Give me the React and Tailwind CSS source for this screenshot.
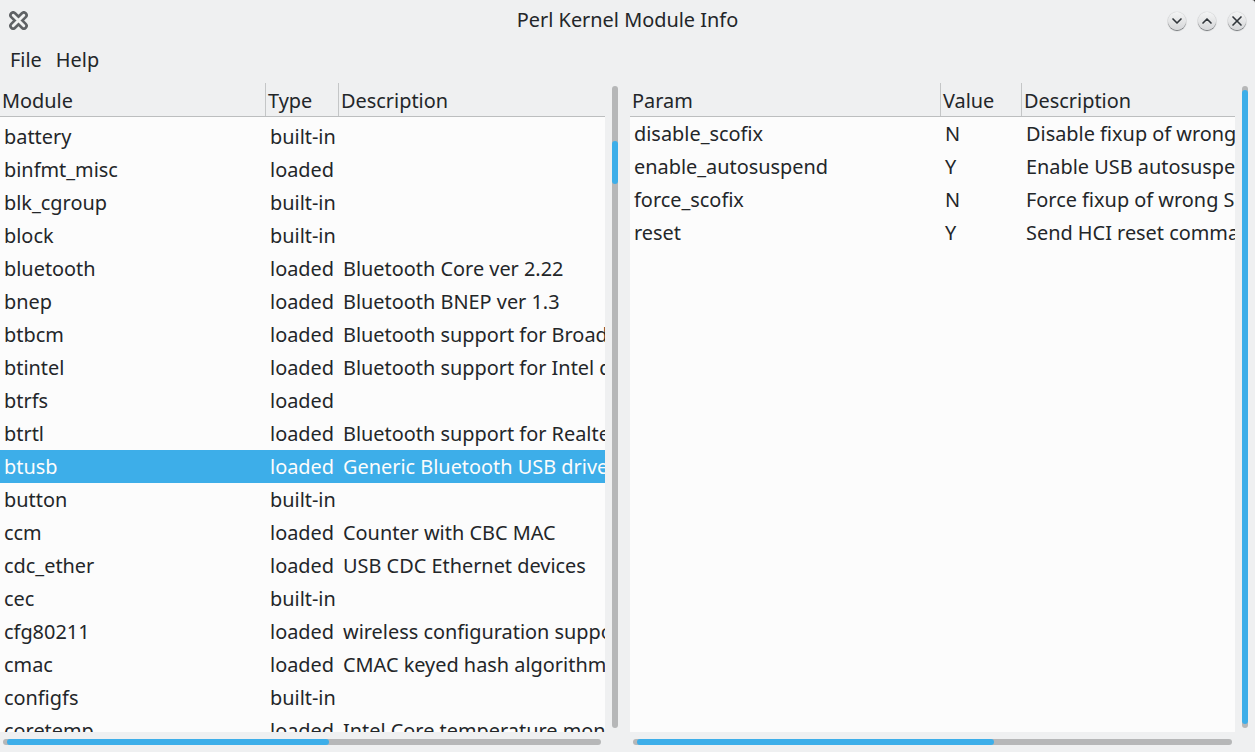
import { ChevronDown, ChevronUp, X } from 'lucide-react'

const MODULES = [
  ['battery', 'built-in', ''],
  ['binfmt_misc', 'loaded', ''],
  ['blk_cgroup', 'built-in', ''],
  ['block', 'built-in', ''],
  ['bluetooth', 'loaded', 'Bluetooth Core ver 2.22'],
  ['bnep', 'loaded', 'Bluetooth BNEP ver 1.3'],
  ['btbcm', 'loaded', 'Bluetooth support for Broadcom devices'],
  ['btintel', 'loaded', 'Bluetooth support for Intel devices'],
  ['btrfs', 'loaded', ''],
  ['btrtl', 'loaded', 'Bluetooth support for Realtek devices'],
  ['btusb', 'loaded', 'Generic Bluetooth USB driver ver 0.8'],
  ['button', 'built-in', ''],
  ['ccm', 'loaded', 'Counter with CBC MAC'],
  ['cdc_ether', 'loaded', 'USB CDC Ethernet devices'],
  ['cec', 'built-in', ''],
  ['cfg80211', 'loaded', 'wireless configuration support'],
  ['cmac', 'loaded', 'CMAC keyed hash algorithm'],
  ['configfs', 'built-in', ''],
  ['coretemp', 'loaded', 'Intel Core temperature monitor'],
]

const PARAMS = [
  ['disable_scofix', 'N', 'Disable fixup of wrong SCO buffer size'],
  ['enable_autosuspend', 'Y', 'Enable USB autosuspend by default'],
  ['force_scofix', 'N', 'Force fixup of wrong SCO buffers size'],
  ['reset', 'Y', 'Send HCI reset command on initialization'],
]

function WinButton({ children }) {
  return (
    <button className="w-[18px] h-[18px] rounded-full flex items-center justify-center text-[#31363b] bg-gradient-to-b from-[#f4f5f5] to-[#d6d7d9] shadow-[0_1px_1px_#6e7174,0_0_1px_#9a9c9e]">
      {children}
    </button>
  )
}

function HeaderCell({ className, children }) {
  return (
    <div className={`h-full shrink-0 overflow-hidden whitespace-nowrap border-r border-[#c4c6c7] pl-[2px] pt-[3px] leading-[30px] ${className}`}>
      {children}
    </div>
  )
}

function VScroll({ top, height }) {
  return (
    <div className="w-[6px] h-[642px] mt-[3px] rounded-full bg-[#b6b7b8] overflow-hidden">
      <div style={{ marginTop: top, height }} className="rounded-full bg-[#3daee9]" />
    </div>
  )
}

function HScroll({ width }) {
  return (
    <div className="h-[6px] rounded-full bg-[#b6b7b8] overflow-hidden">
      <div style={{ width }} className="h-full ml-[4px] rounded-full bg-[#3daee9]" />
    </div>
  )
}

export default function App() {
  return (
    <div className="w-[1255px] h-[752px] overflow-hidden bg-[#2a2a2a]">
      <div className="w-full h-full rounded-tr-[3px] overflow-hidden bg-[#eff0f1] text-[#232629] text-[19.9px] font-['Noto_Sans',sans-serif] flex flex-col">
        {/* title bar */}
        <div className="h-10 shrink-0 flex items-center pl-[9px] pr-[9px]">
          <svg width="19" height="19" viewBox="0 0 20 20" className="shrink-0">
            <path d="M4.4 4.4 L15.6 15.6 M15.6 4.4 L4.4 15.6" stroke="#5f6265" strokeWidth="8.4" strokeLinecap="round" />
            <path d="M4.4 4.4 L15.6 15.6 M15.6 4.4 L4.4 15.6" stroke="#f2f3f3" strokeWidth="3" strokeLinecap="round" />
          </svg>
          <div className="flex-1 text-center pl-[59px]">Perl Kernel Module Info</div>
          <div className="flex gap-3 mt-[1px]">
            <WinButton><ChevronDown size={16} strokeWidth={2.5} /></WinButton>
            <WinButton><ChevronUp size={16} strokeWidth={2.5} /></WinButton>
            <WinButton><X size={16} strokeWidth={2.5} /></WinButton>
          </div>
        </div>

        {/* menu bar */}
        <div className="h-[43px] shrink-0 flex gap-[14px] pl-[10px] pt-[5px] leading-[30px]">
          <span>File</span>
          <span>Help</span>
        </div>

        {/* panes */}
        <div className="flex-1 min-h-0 flex">
          {/* module list */}
          <div className="w-[630px] shrink-0 flex flex-col">
            <div className="flex h-[649px]">
              <div className="w-[605px] shrink-0 flex flex-col overflow-hidden">
                <div className="h-[34px] shrink-0 flex border-b border-[#bcbebf]">
                  <HeaderCell className="w-[266px]">Module</HeaderCell>
                  <HeaderCell className="w-[73px]">Type</HeaderCell>
                  <div className="pl-[2px] pt-[3px] leading-[30px]">Description</div>
                </div>
                <div className="flex-1 min-h-0 overflow-hidden bg-[#fcfcfc] pt-[3px]">
                  {MODULES.map(([name, type, desc]) => (
                    <div key={name} className={`h-[33px] flex leading-[33px] whitespace-nowrap ${name === 'btusb' ? 'bg-[#3daee9] text-[#fcfcfc]' : ''}`}>
                      <div className="w-[266px] shrink-0 pl-[4px]">{name}</div>
                      <div className="w-[73px] shrink-0 pl-[4px]">{type}</div>
                      <div className="flex-1 overflow-hidden pl-[4px]">{desc}</div>
                    </div>
                  ))}
                </div>
              </div>
              <div className="ml-[7px]">
                <VScroll top={55} height={43} />
              </div>
            </div>
            <div className="w-[598px] ml-[3px] mt-[7px]">
              <HScroll width={322} />
            </div>
          </div>

          {/* parameter list */}
          <div className="flex-1 min-w-0 flex flex-col">
            <div className="flex h-[649px]">
              <div className="w-[605px] shrink-0 flex flex-col overflow-hidden">
                <div className="h-[34px] shrink-0 flex border-b border-[#bcbebf]">
                  <HeaderCell className="w-[311px]">Param</HeaderCell>
                  <HeaderCell className="w-[81px]">Value</HeaderCell>
                  <div className="pl-[2px] pt-[3px] leading-[30px]">Description</div>
                </div>
                <div className="flex-1 min-h-0 overflow-hidden bg-[#fcfcfc]">
                  {PARAMS.map(([name, value, desc]) => (
                    <div key={name} className="h-[33px] flex leading-[33px] whitespace-nowrap">
                      <div className="w-[311px] shrink-0 pl-[4px]">{name}</div>
                      <div className="w-[81px] shrink-0 pl-[4px]">{value}</div>
                      <div className="flex-1 overflow-hidden pl-[4px]">{desc}</div>
                    </div>
                  ))}
                </div>
              </div>
              <div className="ml-[7px]">
                <VScroll top={4} height={634} />
              </div>
            </div>
            <div className="w-[599px] ml-[3px] mt-[7px]">
              <HScroll width={357} />
            </div>
          </div>
        </div>
      </div>
    </div>
  )
}
